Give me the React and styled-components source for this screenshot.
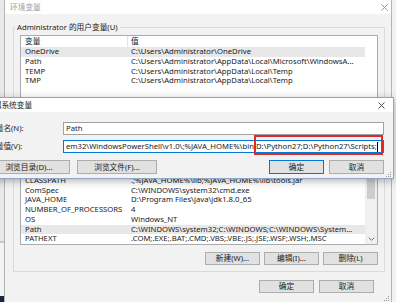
import React from 'react';
import styled, { createGlobalStyle } from 'styled-components';

const GlobalStyle = createGlobalStyle`
  html, body { margin: 0; padding: 0; }
  body {
    width: 396px;
    height: 302px;
    overflow: hidden;
    background: #ececec;
    font-family: "Noto Sans", "Noto Sans CJK SC", sans-serif;
    font-size: 7.7px;
    color: #1a1a1a;
  }
  * { box-sizing: border-box; }
`;

const Screen = styled.div`
  position: relative;
  width: 396px;
  height: 302px;
  display: flex;
  overflow: hidden;
`;

const BackEdge = styled.div`
  flex: none;
  width: ${p => p.$w}px;
  background: ${p => p.$bg};
`;

const Window = styled.div`
  flex: none;
  width: 388px;
  height: 302px;
  position: relative;
  display: flex;
  flex-direction: column;
  background: #f2f2f2;
  border-left: 1px solid #b4b4b4;
  border-right: 1px solid #b4b4b4;
`;

const TitleBar = styled.div`
  flex: none;
  height: 14px;
  background: #ffffff;
  display: flex;
  justify-content: space-between;
  align-items: center;
  padding: ${p => p.$pad};
`;

const TitleText = styled.span`
  line-height: 10px;
  white-space: nowrap;
  color: ${p => (p.$active ? '#1a1a1a' : '#a0a0a0')};
`;

const CloseIcon = styled.svg`
  flex: none;
  width: 7px;
  height: 7px;
`;

const WinBody = styled.div`
  flex: 1;
  display: flex;
  flex-direction: column;
  padding: 8px 6px 0 8px;
`;

const Group = styled.fieldset`
  margin: ${p => p.$mt}px 0 0;
  padding: 3px 6px ${p => p.$pb}px;
  border: 1px solid #dadada;
  min-width: 0;
`;

const Legend = styled.legend`
  margin-left: -5px;
  padding: 0 2px;
  line-height: 10px;
  color: #1a1a1a;
`;

const List = styled.div`
  height: ${p => p.$h}px;
  border: 1px solid #ababab;
  background: #ffffff;
  display: flex;
  overflow: hidden;
`;

const Rows = styled.div`
  flex: 1;
  min-width: 0;
  overflow: hidden;
  display: flex;
  flex-direction: column;
`;

const Header = styled.div`
  flex: none;
  display: flex;
  height: 11px;
  line-height: 11px;
`;

const Row = styled.div`
  flex: none;
  display: flex;
  height: 9.75px;
  line-height: 9.75px;
  background: ${p => (p.$sel ? '#e8e8e8' : 'transparent')};
`;

const NameCell = styled.div`
  flex: none;
  width: 107px;
  padding-left: 4px;
  white-space: nowrap;
  overflow: hidden;
  border-right: ${p => (p.$head ? '1px solid #e3e3e3' : '0')};
`;

const ValueCell = styled.div`
  flex: 1;
  min-width: 0;
  padding-left: 3px;
  white-space: nowrap;
  overflow: hidden;
`;

const ScrollCol = styled.div`
  flex: none;
  width: 12px;
  display: flex;
  flex-direction: column;
  background: ${p => (p.$show ? '#f0f0f0' : '#ffffff')};
`;

const ScrollArrow = styled.div`
  flex: none;
  height: 10px;
  display: flex;
  align-items: center;
  justify-content: center;
`;

const ScrollThumb = styled.div`
  flex: none;
  height: ${p => p.$h}px;
  margin: 0 2px;
  background: #cdcdcd;
`;

const ScrollSpace = styled.div`
  flex: 1;
`;

const ButtonRow = styled.div`
  flex: none;
  display: flex;
  justify-content: flex-end;
  gap: ${p => p.$gap}px;
  margin-top: ${p => p.$mt}px;
  padding-right: ${p => p.$pr || 0}px;
`;

const Button = styled.button`
  flex: none;
  width: ${p => p.$w}px;
  height: ${p => p.$h || 13}px;
  margin: 0;
  padding: 0;
  font: inherit;
  line-height: 11px;
  color: #1a1a1a;
  white-space: nowrap;
  background: #e1e1e1;
  border: 1px solid ${p => (p.$default ? '#0078d7' : '#adadad')};
`;

const Grip = styled.svg`
  position: absolute;
  right: ${p => p.$r}px;
  bottom: ${p => p.$b}px;
  width: 7px;
  height: 7px;
`;

const Dialog = styled.div`
  position: absolute;
  left: -28px;
  top: 97px;
  width: 422px;
  display: flex;
  flex-direction: column;
  background: #f2f2f2;
  border: 1px solid #8ea6c6;
  box-shadow: 0 2px 8px rgba(0, 0, 0, 0.3);
`;

const DialogBody = styled.div`
  display: flex;
  flex-direction: column;
  padding: 10px 9px 4px 15px;
`;

const FieldRow = styled.div`
  display: flex;
  align-items: center;
  height: 13px;
  margin-top: ${p => p.$mt || 0}px;
`;

const FieldLabel = styled.div`
  flex: none;
  width: 75px;
  white-space: nowrap;
  line-height: 11px;
`;

const TextBox = styled.div`
  flex: 1;
  min-width: 0;
  height: 13px;
  display: flex;
  align-items: center;
  padding: 0 1px 0 2px;
  line-height: 11px;
  white-space: nowrap;
  background: #ffffff;
  border: 1px solid ${p => (p.$focus ? '#0078d7' : '#a0a0a0')};
`;

const ClipText = styled.span`
  flex: 0 1 auto;
  min-width: 0;
  overflow: hidden;
  white-space: nowrap;
`;

const Marked = styled.span`
  flex: none;
  position: relative;
  white-space: nowrap;
  &::after {
    content: "";
    position: absolute;
    left: -2px;
    right: -6px;
    top: -6px;
    bottom: -3px;
    border: 2px solid #dc2b2b;
  }
`;

const Caret = styled.span`
  flex: none;
  width: 1px;
  height: 10px;
  margin-left: 0.5px;
  background: #000000;
`;

const DialogButtons = styled.div`
  display: flex;
  align-items: center;
  height: 14px;
  margin-top: 7px;
  gap: 7px;
`;

const Spacer = styled.div`
  flex: 1;
`;

const RightButtons = styled.div`
  display: flex;
  gap: 5px;
`;

const Close = ({ color }) => (
  <CloseIcon viewBox="0 0 7 7">
    <path d="M0.5 0.5 L6.5 6.5 M6.5 0.5 L0.5 6.5" stroke={color} strokeWidth="0.9" fill="none" />
  </CloseIcon>
);

const ResizeGrip = ({ r, b }) => (
  <Grip viewBox="0 0 7 7" $r={r} $b={b}>
    {[[5, 1], [3, 3], [5, 3], [1, 5], [3, 5], [5, 5]].map(([x, y]) => (
      <rect key={`${x}-${y}`} x={x} y={y} width="1" height="1" fill="#9a9a9a" />
    ))}
  </Grip>
);

const userVars = [
  ['OneDrive', 'C:\\Users\\Administrator\\OneDrive', true],
  ['Path', 'C:\\Users\\Administrator\\AppData\\Local\\Microsoft\\WindowsA...'],
  ['TEMP', 'C:\\Users\\Administrator\\AppData\\Local\\Temp'],
  ['TMP', 'C:\\Users\\Administrator\\AppData\\Local\\Temp'],
];

const systemVars = [
  ['asl.log', 'Destination=file'],
  ['CLASSPATH', '.;%JAVA_HOME%\\lib;%JAVA_HOME%\\lib\\tools.jar'],
  ['ComSpec', 'C:\\WINDOWS\\system32\\cmd.exe'],
  ['JAVA_HOME', 'D:\\Program Files\\java\\jdk1.8.0_65'],
  ['NUMBER_OF_PROCESSORS', '4'],
  ['OS', 'Windows_NT'],
  ['Path', 'C:\\WINDOWS\\system32;C:\\WINDOWS;C:\\WINDOWS\\System...', true],
  ['PATHEXT', '.COM;.EXE;.BAT;.CMD;.VBS;.VBE;.JS;.JSE;.WSF;.WSH;.MSC'],
];

const VarList = ({ items, h, scroll }) => (
  <List $h={h}>
    <Rows>
      <Header>
        <NameCell $head>变量</NameCell>
        <ValueCell>值</ValueCell>
      </Header>
      {items.map(([name, value, sel]) => (
        <Row key={name} $sel={sel}>
          <NameCell>{name}</NameCell>
          <ValueCell>{value}</ValueCell>
        </Row>
      ))}
    </Rows>
    <ScrollCol $show={scroll}>
      {scroll && (
        <>
          <ScrollArrow />
          <ScrollThumb $h={34} />
          <ScrollSpace />
          <ScrollArrow>
            <svg width="7" height="4" viewBox="0 0 7 4">
              <path d="M0.8 0.8 L3.5 3.2 L6.2 0.8" stroke="#606060" strokeWidth="0.9" fill="none" />
            </svg>
          </ScrollArrow>
        </>
      )}
    </ScrollCol>
  </List>
);

export default function App() {
  return (
    <>
      <GlobalStyle />
      <Screen>
        <BackEdge
          $w={4}
          $bg="linear-gradient(#e9e9e9 0 241px, #c6c6c6 241px 243px, #f3f3f3 243px 296px, #1b2741 296px)"
        />
        <Window>
          <TitleBar $pad="0 3px 0 5px">
            <TitleText>环境变量</TitleText>
            <Close color="#8a8a8a" />
          </TitleBar>
          <WinBody>
            <Group $mt={0} $pb={5}>
              <Legend>Administrator 的用户变量(U)</Legend>
              <VarList items={userVars} h={76} />
              <ButtonRow $gap={4} $mt={5}>
                <Button $w={55}>新建(N)...</Button>
                <Button $w={55}>编辑(E)...</Button>
                <Button $w={55}>删除(D)</Button>
              </ButtonRow>
            </Group>
            <Group $mt={6} $pb={6}>
              <Legend>系统变量(S)</Legend>
              <VarList items={systemVars} h={91} scroll />
              <ButtonRow $gap={4} $mt={7}>
                <Button $w={55}>新建(W)...</Button>
                <Button $w={55}>编辑(I)...</Button>
                <Button $w={55}>删除(L)</Button>
              </ButtonRow>
            </Group>
            <ButtonRow $gap={5} $mt={8} $pr={11}>
              <Button $w={55}>确定</Button>
              <Button $w={55}>取消</Button>
            </ButtonRow>
          </WinBody>
          <ResizeGrip r={1} b={0} />
        </Window>
        <BackEdge $w={4} $bg="#f2f2f2" />

        <Dialog>
          <TitleBar $pad="0 8px 0 13px">
            <TitleText $active>编辑系统变量</TitleText>
            <Close color="#3a3a3a" />
          </TitleBar>
          <DialogBody>
            <FieldRow>
              <FieldLabel>变量名(N):</FieldLabel>
              <TextBox>Path</TextBox>
            </FieldRow>
            <FieldRow $mt={5}>
              <FieldLabel>变量值(V):</FieldLabel>
              <TextBox $focus>
                <ClipText>em32\WindowsPowerShell\v1.0\;%JAVA_HOME%\bin;</ClipText>
                <Marked>D:\Python27;D:\Python27\Scripts;</Marked>
                <Caret />
              </TextBox>
            </FieldRow>
            <DialogButtons>
              <Button $w={82} $h={14}>浏览目录(D)...</Button>
              <Button $w={80} $h={14}>浏览文件(F)...</Button>
              <Spacer />
              <RightButtons>
                <Button $w={55} $h={14} $default>确定</Button>
                <Button $w={55} $h={14}>取消</Button>
              </RightButtons>
            </DialogButtons>
          </DialogBody>
          <ResizeGrip r={1} b={0} />
        </Dialog>
      </Screen>
    </>
  );
}
